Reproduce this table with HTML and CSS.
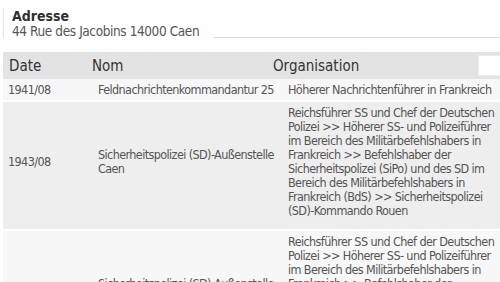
FILE: index.html
```html
<!DOCTYPE html>
<html>
<head>
<meta charset="utf-8">
<link rel="stylesheet" href="styles.css">
</head>
<body>
<div class="page">
  <div class="address">
    <div class="address-box">
      <div class="label">Adresse</div>
      <div class="value">44 Rue des Jacobins 14000 Caen</div>
    </div>
    <div class="rule"></div>
  </div>
  <div class="table">
    <div class="head">
      <div class="h-date">Date</div>
      <div class="h-nom">Nom</div>
      <div class="h-org">Organisation</div>
      <div class="filter"></div>
    </div>
    <div class="row row-first">
      <div class="c-date">1941/08</div>
      <div class="c-nom">Feldnachrichtenkommandantur 25</div>
      <div class="c-org">Höherer Nachrichtenführer in Frankreich</div>
    </div>
    <div class="row row-dark">
      <div class="c-date">1943/08</div>
      <div class="c-nom">Sicherheitspolizei (SD)-Außenstelle Caen</div>
      <div class="c-org">Reichsführer SS und Chef der Deutschen Polizei &gt;&gt; Höherer SS- und Polizeiführer im Bereich des Militärbefehlshabers in Frankreich &gt;&gt; Befehlshaber der Sicherheitspolizei (SiPo) und des SD im Bereich des Militärbefehlshabers in Frankreich (BdS) &gt;&gt; Sicherheitspolizei (SD)-Kommando Rouen</div>
    </div>
    <div class="row row-light">
      <div class="c-date">1943/08</div>
      <div class="c-nom">Sicherheitspolizei (SD)-Außenstelle Caen</div>
      <div class="c-org">Reichsführer SS und Chef der Deutschen Polizei &gt;&gt; Höherer SS- und Polizeiführer im Bereich des Militärbefehlshabers in Frankreich &gt;&gt; Befehlshaber der Sicherheitspolizei (SiPo) und des SD im Bereich des Militärbefehlshabers in Frankreich (BdS) &gt;&gt; Sicherheitspolizei (SD)-Kommando Caen</div>
    </div>
  </div>
</div>
</body>
</html>
```
FILE: styles.css
```css
html, body {
  margin: 0;
  padding: 0;
  background: #ffffff;
  overflow: hidden;
}
body {
  font-family: "DejaVu Sans Condensed", "DejaVu Sans", sans-serif;
  color: #444;
}
.page {
  padding: 8px 0 0 3px;
}
.address {
  display: flex;
  align-items: flex-end;
}
.address-box {
  border-left: 1px solid #e6e6e6;
  padding: 1px 14px 0 8px;
  height: 29px;
}
.label {
  font-size: 14px;
  line-height: 15px;
  color: #2f2f2f;
  font-weight: bold;
}
.value {
  font-size: 13.5px;
  line-height: 15px;
  letter-spacing: -0.4px;
  color: #555;
}
.rule {
  flex: 1;
  border-bottom: 1px solid #dcdcdc;
}
.table {
  margin-top: 14px;
}
.head {
  display: grid;
  grid-template-columns: 83px 181px 1fr 22px;
  align-items: center;
  height: 27px;
  background: #e3e3e3;
  font-size: 15px;
  color: #333;
  padding-left: 6px;
}
.filter {
  background: #fff;
  height: 19px;
  border: 1px solid #ececec;
  border-right: none;
}
.row {
  display: grid;
  grid-template-columns: 90px 190px 207px;
  align-items: center;
  font-size: 12.5px;
  line-height: 14px;
  letter-spacing: -0.6px;
  color: #555;
  padding: 4px 0 4px 5px;
  border-bottom: 2px solid #fff;
}
.c-nom { padding-right: 12px; }
.row-first { background: #f7f7f7; padding-bottom: 3px; }
.row-light { background: #f7f7f7; }
.row-dark { background: #eeeeee; padding-bottom: 11px; }
```
